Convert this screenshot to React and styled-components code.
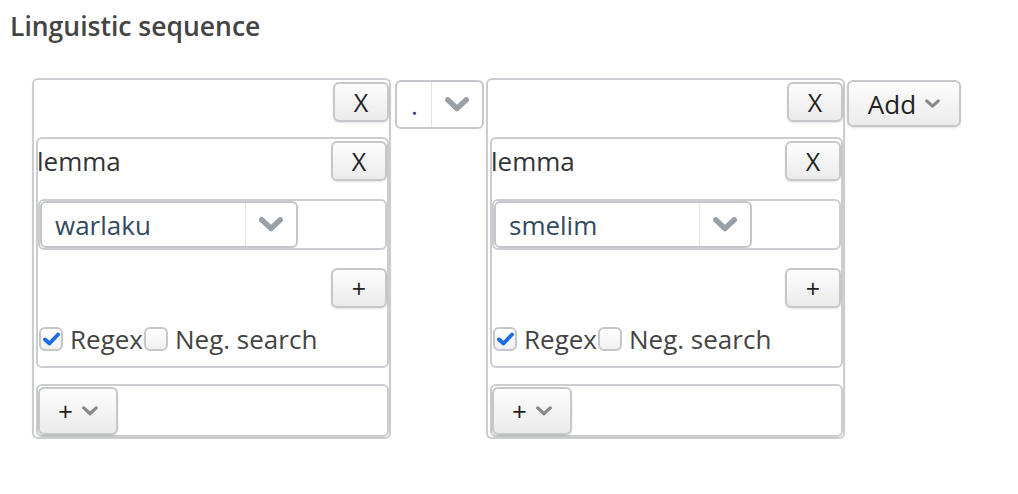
import styled, { createGlobalStyle } from 'styled-components'

const GlobalStyle = createGlobalStyle`
  body {
    margin: 0;
    background: #fff;
    font-family: 'Open Sans', 'Liberation Sans', sans-serif;
    color: #333;
  }
`

const Page = styled.div`
  padding: 8px 0 0 10px;
`

const Title = styled.h2`
  margin: 0;
  font-size: 26.5px;
  line-height: 37px;
  font-weight: 600;
  color: #444;
`

const Sequence = styled.div`
  display: flex;
  align-items: flex-start;
  margin: 33px 0 0 22px;
`

const Token = styled.div`
  box-sizing: border-box;
  width: 359px;
  height: 361px;
  border: 2px solid #cbcdd1;
  border-radius: 6px;
  padding-left: 2px;
  display: flex;
  flex-direction: column;
  box-shadow: 0 1px 2px rgba(0, 0, 0, 0.08);
`

const TokenHead = styled.div`
  height: 57px;
  display: flex;
  justify-content: flex-end;
  align-items: flex-start;
  padding-top: 2px;
  box-sizing: border-box;
`

const Box = styled.div`
  box-sizing: border-box;
  border: 2px solid #cbcdd1;
  border-radius: 6px;
  background: #fff;
`

const Constraint = styled(Box)`
  height: 231px;
  display: flex;
  flex-direction: column;
`

const ConstraintHead = styled.div`
  display: flex;
  justify-content: space-between;
  align-items: center;
  padding-top: 2px;
`

const Label = styled.span`
  font-size: 26px;
  margin-left: -1px;
  color: #333;
`

const ValueBox = styled(Box)`
  margin-top: 18px;
  height: 51px;
`

const PlusRow = styled.div`
  display: flex;
  justify-content: flex-end;
  margin-top: 18px;
`

const CheckRow = styled.div`
  display: flex;
  align-items: center;
  margin-top: 18px;
  height: 26px;
  font-size: 26px;
  color: #444;
`

const Check = styled.span`
  box-sizing: border-box;
  width: 24px;
  height: 24px;
  margin: 0 3px 0 1px;
  border: 2px solid #c4c6ca;
  border-radius: 6px;
  background: linear-gradient(#fff, #f0f0f0);
  display: flex;
  align-items: center;
  justify-content: center;
  & + span {
    margin-left: 4px;
  }
`

const CheckText = styled.span`
  margin-left: 6px;
  line-height: 26px;
`

const BottomBox = styled(Box)`
  margin-top: 16px;
  height: 53px;
  padding: 1px 0 0 0;
`

const Button = styled.button`
  box-sizing: border-box;
  width: ${(p) => p.$w}px;
  height: ${(p) => p.$h}px;
  border: 2px solid #c5c7cb;
  border-radius: 6px;
  background: linear-gradient(#fdfdfd, #ebebeb);
  box-shadow: 0 1px 2px rgba(0, 0, 0, 0.12);
  font-family: 'Open Sans', 'Liberation Sans', sans-serif;
  font-size: ${(p) => p.$fs || 25}px;
  color: #222;
  padding: 0;
  display: flex;
  align-items: center;
  justify-content: center;
  gap: 9px;
`

const Select = styled.div`
  box-sizing: border-box;
  width: ${(p) => p.$w}px;
  height: ${(p) => p.$h}px;
  border: 2px solid #c5c7cb;
  border-radius: 6px;
  background: #fff;
  display: flex;
  align-items: stretch;
`

const SelectValue = styled.div`
  flex: 1;
  display: flex;
  align-items: center;
  padding-left: ${(p) => p.$pad}px;
  font-size: 26px;
  color: #34495e;
`

const SelectArrow = styled.div`
  width: 50px;
  border-left: 1px solid #e3e3e3;
  display: flex;
  align-items: center;
  justify-content: center;
`

const OpSelect = styled(Select)`
  margin: 2px 2px 0 4px;
`

const AddButton = styled(Button)`
  margin: 2px 0 0 2px;
  font-size: 26px;
`

const Chevron = ({ size = 24, color = '#9aa0a8', w = 5 }) => (
  <svg width={size} height={size * 0.6} viewBox="0 0 22 13">
    <polyline
      points="2.5,2.5 11,10.5 19.5,2.5"
      fill="none"
      stroke={color}
      strokeWidth={w}
      strokeLinecap="round"
      strokeLinejoin="round"
    />
  </svg>
)

const Tick = () => (
  <svg width="17" height="14" viewBox="0 0 17 14">
    <polyline
      points="2,7.5 6.5,11.5 15,2.5"
      fill="none"
      stroke="#1b6ce6"
      strokeWidth="3.8"
      strokeLinecap="round"
      strokeLinejoin="round"
    />
  </svg>
)

const TokenCard = ({ word }) => (
  <Token>
    <TokenHead>
      <Button $w={56} $h={40}>X</Button>
    </TokenHead>
    <Constraint>
      <ConstraintHead>
        <Label>lemma</Label>
        <Button $w={56} $h={40}>X</Button>
      </ConstraintHead>
      <ValueBox>
        <Select $w={258} $h={47}>
          <SelectValue $pad={13}>{word}</SelectValue>
          <SelectArrow>
            <Chevron />
          </SelectArrow>
        </Select>
      </ValueBox>
      <PlusRow>
        <Button $w={56} $h={40} $fs={25}>+</Button>
      </PlusRow>
      <CheckRow>
        <Check>
          <Tick />
        </Check>
        <CheckText>Regex</CheckText>
        <Check />
        <CheckText>Neg. search</CheckText>
      </CheckRow>
    </Constraint>
    <BottomBox>
      <Button $w={80} $h={48} $fs={26}>
        +
        <Chevron size={16} color="#888" w={4.5} />
      </Button>
    </BottomBox>
  </Token>
)

export default function App() {
  return (
    <Page>
      <GlobalStyle />
      <Title>Linguistic sequence</Title>
      <Sequence>
        <TokenCard word="warlaku" />
        <OpSelect $w={89} $h={49}>
          <SelectValue $pad={14}>.</SelectValue>
          <SelectArrow>
            <Chevron />
          </SelectArrow>
        </OpSelect>
        <TokenCard word="smelim" />
        <AddButton $w={114} $h={47}>
          Add
          <Chevron size={15} color="#888" w={4.5} />
        </AddButton>
      </Sequence>
    </Page>
  )
}
